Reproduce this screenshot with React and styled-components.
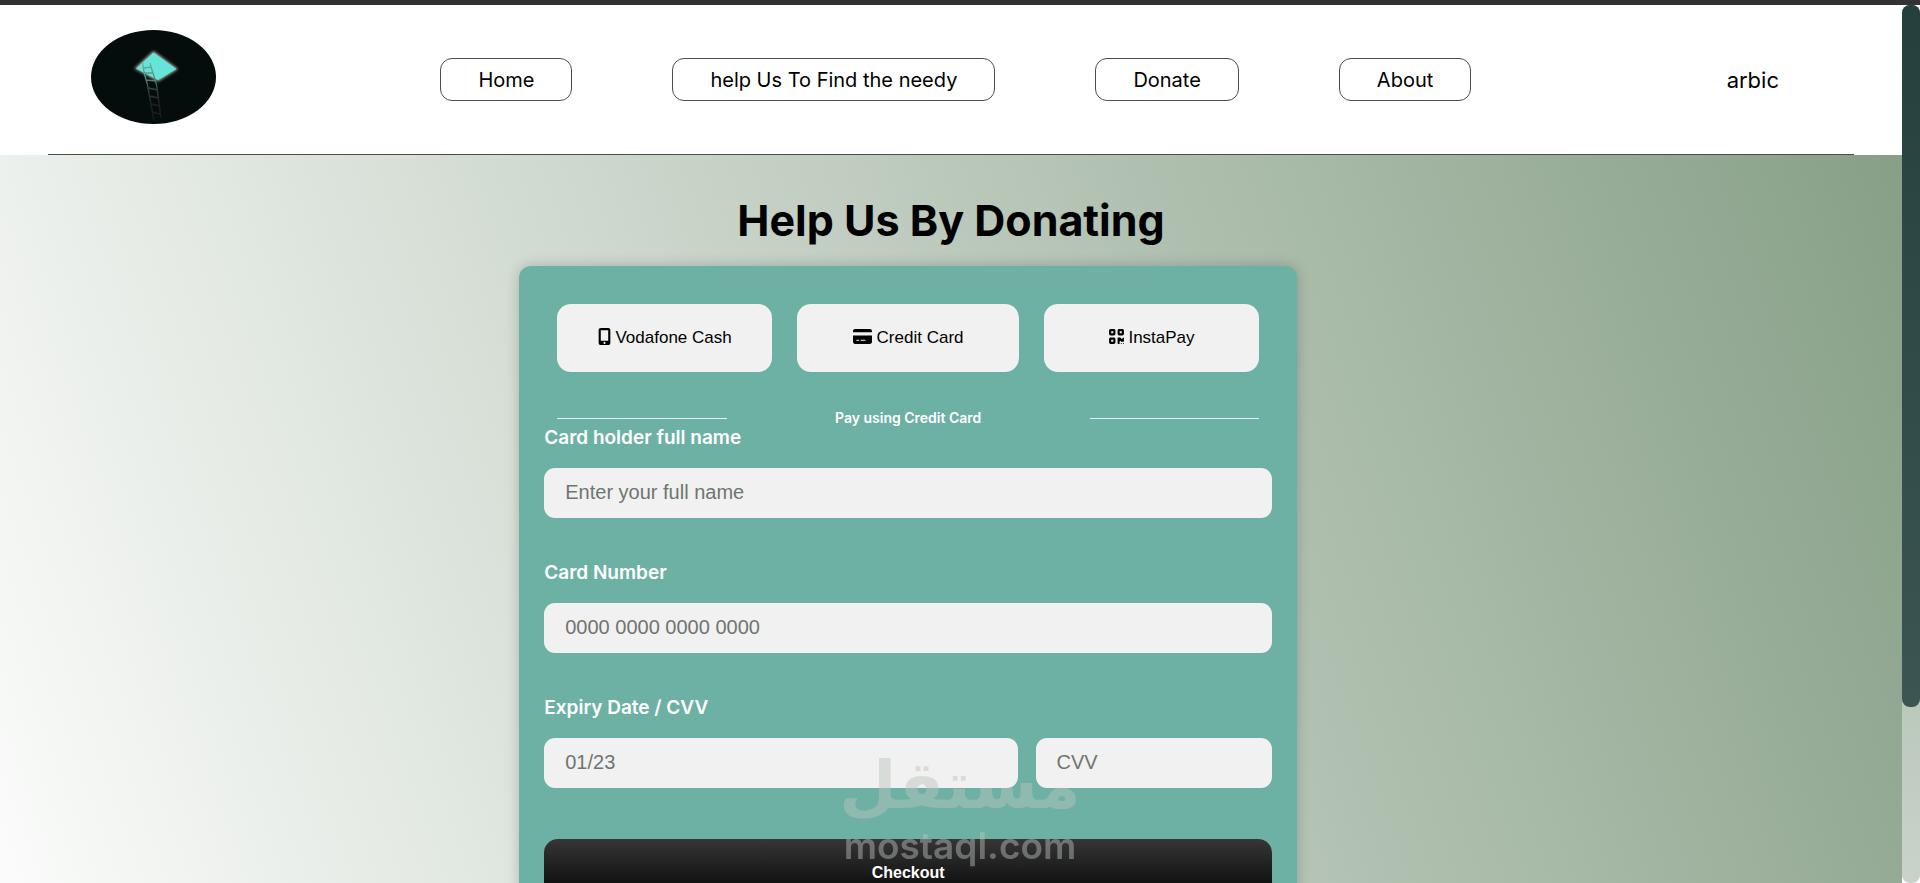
import React from "react";
import styled, { createGlobalStyle } from "styled-components";
import {
  FaCreditCard,
  FaMobileScreenButton,
  FaQrcode
} from "react-icons/fa6";

const GlobalStyle = createGlobalStyle`
  * {
    box-sizing: border-box;
  }

  body {
    margin: 0;
    font-family: Inter, "Liberation Sans", sans-serif;
    color: #000;
  }
`;

const Window = styled.div`
  position: relative;
  display: flex;
  height: 100vh;
  overflow: hidden;
  border-top: 5px solid #333;
  background: #fff;
`;

const Scroller = styled.div`
  flex: 1;
  min-width: 0;
  overflow-y: auto;
  scrollbar-width: none;
`;

const ScrollRail = styled.div`
  width: 18px;
  border-radius: 8px;
  background: linear-gradient(#849d84, #c9d3ca);
`;

const ScrollThumb = styled.div`
  height: 80%;
  border-radius: 8px;
  background: linear-gradient(#24403d, #3c5553);
`;

const Page = styled.div`
  background: linear-gradient(70deg, #fff, #849d84);
`;

const Header = styled.header`
  padding: 0 48px;
  background: #fff;
`;

const HeaderInner = styled.div`
  display: flex;
  align-items: center;
  justify-content: space-between;
  height: 150px;
  padding: 0 44px 0 43px;
  border-bottom: 1px solid #4c4c4c;
`;

const LogoLink = styled.a`
  display: block;
  padding-bottom: 5px;

  svg {
    display: block;
  }
`;

const Nav = styled.nav`
  display: flex;
  gap: 100px;
`;

const NavLink = styled.a`
  padding: 9px 37px 7px;
  border: 1px solid #4c4c4c;
  border-radius: 12px;
  color: #000;
  font-size: 20px;
  line-height: 25px;
  text-decoration: none;
`;

const LangLink = styled.a`
  padding: 0 31px;
  color: #000;
  font-size: 22px;
  text-decoration: none;
`;

const Main = styled.main`
  padding-bottom: 154px;
`;

const Title = styled.h1`
  margin: 0;
  padding: 36px 0 16px;
  font-size: 43px;
  font-weight: 700;
  line-height: 59px;
  text-align: center;
`;

const Card = styled.form`
  width: 40.9%;
  min-width: 620px;
  margin-left: 27.3%;
  padding: 38px 25px;
  border-radius: 12px;
  background: #6cb1a3;
  box-shadow: 0 0 14px rgba(0, 0, 0, 0.2);
`;

const Methods = styled.div`
  display: grid;
  grid-template-columns: 31fr 32fr 31fr;
  gap: 25px;
  padding: 0 13px;
`;

const MethodButton = styled.button`
  height: 68px;
  border: none;
  border-radius: 14px;
  background: #f1f1f1;
  color: #000;
  font-family: "Liberation Sans", Arial, sans-serif;
  font-size: 17px;

  svg {
    width: ${props => props.$iconWidth}px;
    height: 17px;
    vertical-align: -2px;
  }
`;

const Separator = styled.div`
  display: grid;
  grid-template-columns: 1fr 2fr 1fr;
  align-items: center;
  gap: 12px;
  margin-top: 38px;
  padding: 0 13px;
  color: #fff;
  font-size: 14px;
  font-weight: 600;
  line-height: 16px;
  text-align: center;
`;

const Line = styled.hr`
  width: 100%;
  height: 1px;
  margin: 0;
  border: none;
  background: #e4f3ef;
`;

const Field = styled.div`
  margin-bottom: ${props => (props.$last ? "51px" : "43px")};
`;

const Label = styled.label`
  display: block;
  margin-bottom: 18px;
  color: #fff;
  font-size: 19px;
  font-weight: 600;
  line-height: 24px;
`;

const Split = styled.div`
  display: grid;
  grid-template-columns: 2fr 1fr;
  gap: 18px;
`;

const Input = styled.input`
  display: block;
  width: 100%;
  height: 50px;
  padding: 0 21px 2px;
  border: none;
  border-radius: 11px;
  background: #f1f1f1;
  font-family: "Liberation Sans", Arial, sans-serif;
  font-size: 20px;

  &::placeholder {
    color: #6f756f;
  }
`;

const CheckoutButton = styled.button`
  display: block;
  width: 100%;
  height: 68px;
  border: none;
  border-radius: 14px;
  background: linear-gradient(#363636, #151515 60%, #000);
  color: #fff;
  font-family: "Liberation Sans", Arial, sans-serif;
  font-size: 16px;
  font-weight: 700;
`;

const Watermark = styled.div`
  position: absolute;
  right: 0;
  bottom: 17px;
  left: 0;
  display: flex;
  flex-direction: column;
  align-items: center;
  color: rgb(188, 196, 190);
  opacity: 0.46;
  pointer-events: none;
`;

const WatermarkName = styled.span`
  font-family: "DejaVu Sans", sans-serif;
  font-size: 66px;
  font-weight: 700;
  line-height: 78px;
`;

const WatermarkSite = styled.span`
  font-size: 37px;
  font-weight: 600;
  line-height: 41px;
`;

const Logo = () => (
  <svg width="125" height="94" viewBox="0 0 125 94" aria-hidden="true">
    <defs>
      <filter id="glow" x="-30%" y="-30%" width="160%" height="160%">
        <feGaussianBlur stdDeviation="1.6" />
      </filter>
      <linearGradient id="fade" x1="0" y1="0" x2="0" y2="1">
        <stop offset="0" stopColor="#6fb5a8" />
        <stop offset="0.3" stopColor="#4f8178" />
        <stop offset="0.45" stopColor="#2c4643" />
        <stop offset="0.7" stopColor="#251f22" />
        <stop offset="1" stopColor="#1c1517" />
      </linearGradient>
    </defs>
    <ellipse cx="62.5" cy="47" rx="62.5" ry="47" fill="#040d0b" />
    <path d="M62.5 21 L87 39 L67 51.5 L43.5 38.5 Z" fill="#a8aca8" filter="url(#glow)" />
    <path d="M62.5 22.5 L85.5 39 L67 50 L45 38.5 Z" fill="#66e4d8" />
    <path
      d="M52 33 C52 44 56 50 57 58 L63 91 M59 33 C62 45 65 50 66 58 L70 88 M53 38 L60 37 M53 43 L62 43 M55 50 L65 51 M57 58 L67 60 M58 66 L68 68 M60 74 L69 76 M61 82 L69 84"
      fill="none"
      stroke="url(#fade)"
      strokeWidth="1.4"
    />
  </svg>
);

const links = ["Home", "help Us To Find the needy", "Donate", "About"];

const methods = [
  { name: "Vodafone Cash", Icon: FaMobileScreenButton, iconWidth: 13 },
  { name: "Credit Card", Icon: FaCreditCard, iconWidth: 19 },
  { name: "InstaPay", Icon: FaQrcode, iconWidth: 15 }
];

class App extends React.Component {
  state = {
    name: "",
    number: "",
    expiry: "",
    cvv: ""
  };

  handleChanges = event => {
    this.setState({ [event.target.name]: event.target.value });
  };

  handleSubmit = event => {
    event.preventDefault();
  };

  render() {
    return (
      <Window>
        <GlobalStyle />
        <Scroller>
          <Page>
            <Header>
              <HeaderInner>
                <LogoLink href='#home' aria-label='Home'>
                  <Logo />
                </LogoLink>
                <Nav>
                  {links.map(link => (
                    <NavLink href='#page' key={link}>
                      {link}
                    </NavLink>
                  ))}
                </Nav>
                <LangLink href='#lang'>arbic</LangLink>
              </HeaderInner>
            </Header>

            <Main>
              <Title>Help Us By Donating</Title>
              <Card onSubmit={this.handleSubmit}>
                <Methods>
                  {methods.map(({ name, Icon, iconWidth }) => (
                    <MethodButton type='button' key={name} $iconWidth={iconWidth}>
                      <Icon /> {name}
                    </MethodButton>
                  ))}
                </Methods>

                <Separator>
                  <Line />
                  <span>Pay using Credit Card</span>
                  <Line />
                </Separator>

                <Field>
                  <Label htmlFor='name'>Card holder full name</Label>
                  <Input
                    id='name'
                    name='name'
                    value={this.state.name}
                    onChange={this.handleChanges}
                    placeholder='Enter your full name'
                  />
                </Field>
                <Field>
                  <Label htmlFor='number'>Card Number</Label>
                  <Input
                    id='number'
                    name='number'
                    value={this.state.number}
                    onChange={this.handleChanges}
                    placeholder='0000 0000 0000 0000'
                  />
                </Field>
                <Field $last>
                  <Label id='expiry-label' htmlFor='expiry'>
                    Expiry Date / CVV
                  </Label>
                  <Split>
                    <Input
                      id='expiry'
                      name='expiry'
                      value={this.state.expiry}
                      onChange={this.handleChanges}
                      placeholder='01/23'
                    />
                    <Input
                      name='cvv'
                      aria-labelledby='expiry-label'
                      value={this.state.cvv}
                      onChange={this.handleChanges}
                      placeholder='CVV'
                    />
                  </Split>
                </Field>

                <CheckoutButton type='submit'>Checkout</CheckoutButton>
              </Card>
            </Main>
          </Page>
        </Scroller>
        <ScrollRail>
          <ScrollThumb />
        </ScrollRail>

        <Watermark>
          <WatermarkName lang='ar'>مستقل</WatermarkName>
          <WatermarkSite>mostaql.com</WatermarkSite>
        </Watermark>
      </Window>
    );
  }
}

export default App;
